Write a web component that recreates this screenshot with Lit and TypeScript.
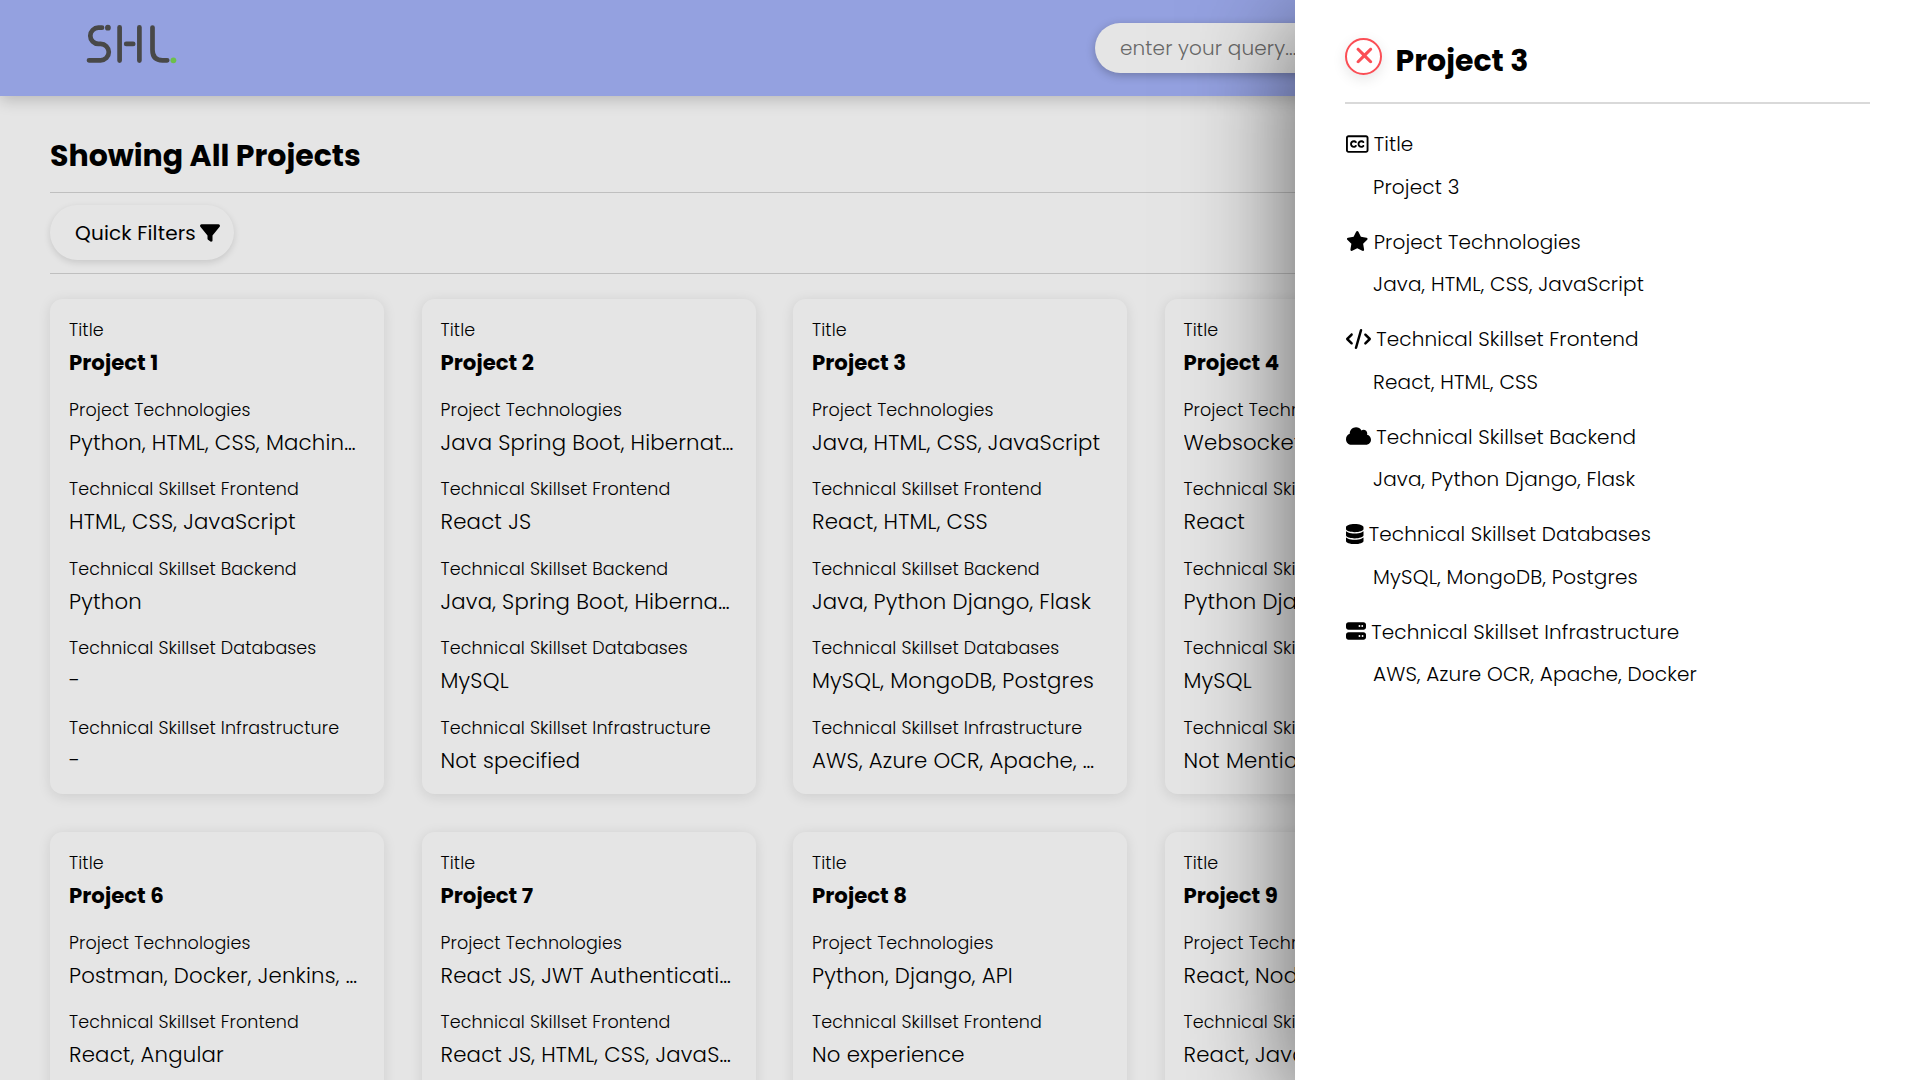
import { LitElement, html, css, svg } from "lit";
import { customElement, property } from "lit/decorators.js";

interface Project {
  title: string;
  technologies: string;
  frontend: string;
  backend: string;
  databases: string;
  infrastructure: string;
}

const p = (
  title: string,
  technologies: string,
  frontend: string,
  backend: string,
  databases: string,
  infrastructure: string
): Project => ({ title, technologies, frontend, backend, databases, infrastructure });

const PROJECTS: Project[] = [
  p("Project 1", "Python, HTML, CSS, Machine Learning", "HTML, CSS, JavaScript", "Python", "-", "-"),
  p("Project 2", "Java Spring Boot, Hibernate, MySQL", "React JS", "Java, Spring Boot, Hibernate, JPA", "MySQL", "Not specified"),
  p("Project 3", "Java, HTML, CSS, JavaScript", "React, HTML, CSS", "Java, Python Django, Flask", "MySQL, MongoDB, Postgres", "AWS, Azure OCR, Apache, Docker"),
  p("Project 4", "Websockets, Python", "React", "Python Django", "MySQL", "Not Mentioned"),
  p("Project 5", "Python", "React", "Python", "MySQL", "AWS"),
  p("Project 6", "Postman, Docker, Jenkins, AWS Cloud", "React, Angular", "Java", "MySQL", "AWS"),
  p("Project 7", "React JS, JWT Authentication", "React JS, HTML, CSS, JavaScript", "Java", "MySQL", "AWS"),
  p("Project 8", "Python, Django, API", "No experience", "Python", "MySQL", "AWS"),
  p("Project 9", "React, Node JS", "React, JavaScript", "Node JS", "MongoDB", "AWS"),
  p("Project 10", "React", "React", "Node JS", "MongoDB", "AWS"),
];

const ICONS: Record<string, { w: number; d: string }> = {
  captions: {
    w: 576,
    d: "M512 80c8.800 0 16 7.200 16 16V416c0 8.800-7.200 16-16 16H64c-8.800 0-16-7.200-16-16V96c0-8.800 7.200-16 16-16H512zM64 32C28.700 32 0 60.700 0 96V416c0 35.300 28.700 64 64 64H512c35.300 0 64-28.700 64-64V96c0-35.300-28.700-64-64-64H64zM200 208c14.200 0 27 6.100 35.800 16c8.800 9.900 24 10.700 33.900 1.900s10.700-24 1.900-33.900c-17.500-19.600-43.100-32-71.500-32c-53 0-96 43-96 96s43 96 96 96c28.400 0 54-12.400 71.500-32c8.800-9.900 8-25-1.900-33.900s-25-8-33.900 1.900c-8.800 9.900-21.600 16-35.800 16c-26.500 0-48-21.500-48-48s21.500-48 48-48zm144 48c0-26.500 21.500-48 48-48c14.200 0 27 6.100 35.800 16c8.800 9.900 24 10.700 33.900 1.900s10.700-24 1.900-33.900c-17.500-19.600-43.100-32-71.500-32c-53 0-96 43-96 96s43 96 96 96c28.400 0 54-12.400 71.500-32c8.800-9.900 8-25-1.900-33.900s-25-8-33.900 1.900c-8.800 9.900-21.600 16-35.800 16c-26.500 0-48-21.500-48-48z",
  },
  star: {
    w: 576,
    d: "M316.900 18C311.600 7 300.400 0 288.100 0s-23.400 7-28.800 18L195 150.300 51.400 171.500c-12 1.800-22 10.200-25.700 21.700s-.7 24.200 7.900 32.700L137.800 329 113.200 474.700c-2 12 3 24.200 12.900 31.300s23 8 33.800 2.300l128.300-68.500 128.300 68.500c10.800 5.700 23.900 4.900 33.800-2.300s14.900-19.300 12.900-31.300L438.500 329 542.700 225.900c8.600-8.500 11.700-21.200 7.900-32.700s-13.700-19.900-25.700-21.700L381.200 150.300 316.900 18z",
  },
  code: {
    w: 640,
    d: "M392.800 1.200c-17-4.900-34.700 5-39.600 22l-128 448c-4.900 17 5 34.700 22 39.600s34.700-5 39.600-22l128-448c4.900-17-5-34.700-22-39.600zm80.600 120.100c-12.500 12.500-12.500 32.800 0 45.300L562.700 256l-89.400 89.400c-12.500 12.500-12.500 32.800 0 45.300s32.800 12.500 45.300 0l112-112c12.500-12.500 12.500-32.800 0-45.300l-112-112c-12.500-12.500-32.800-12.500-45.300 0zm-306.700 0c-12.500-12.500-32.800-12.500-45.300 0l-112 112c-12.500 12.500-12.500 32.800 0 45.300l112 112c12.500 12.500 32.800 12.500 45.300 0s12.500-32.800 0-45.300L77.300 256l89.400-89.400c12.500-12.500 12.500-32.800 0-45.300z",
  },
  cloud: {
    w: 640,
    d: "M0 336c0 79.500 64.500 144 144 144H512c70.700 0 128-57.300 128-128c0-61.900-44-113.600-102.400-125.400c4.100-10.700 6.400-22.400 6.400-34.600c0-53-43-96-96-96c-19.700 0-38.100 6-53.300 16.200C367 64.200 315.300 32 256 32C167.600 32 96 103.600 96 192c0 2.700 .1 5.400 .2 8.100C40.200 219.800 0 273.200 0 336z",
  },
  database: {
    w: 448,
    d: "M448 80v48c0 44.200-100.300 80-224 80S0 172.200 0 128V80C0 35.800 100.300 0 224 0S448 35.800 448 80zM393.200 214.700c20.800-7.400 39.900-16.900 54.800-28.600V288c0 44.200-100.300 80-224 80S0 332.200 0 288V186.100c14.900 11.800 34 21.200 54.800 28.600C99.700 230.700 159.500 240 224 240s124.300-9.300 169.200-25.300zM0 346.100c14.900 11.800 34 21.200 54.800 28.600C99.700 390.700 159.500 400 224 400s124.300-9.300 169.200-25.300c20.800-7.400 39.900-16.900 54.800-28.600V432c0 44.200-100.300 80-224 80S0 476.200 0 432V346.100z",
  },
  server: {
    w: 512,
    d: "M64 32C28.700 32 0 60.700 0 96v64c0 35.300 28.700 64 64 64H448c35.300 0 64-28.700 64-64V96c0-35.300-28.700-64-64-64H64zm280 72a24 24 0 1 1 0 48 24 24 0 1 1 0-48zm48 24a24 24 0 1 1 48 0 24 24 0 1 1 -48 0zM64 288c-35.300 0-64 28.700-64 64v64c0 35.300 28.700 64 64 64H448c35.300 0 64-28.700 64-64V352c0-35.300-28.700-64-64-64H64zm280 72a24 24 0 1 1 0 48 24 24 0 1 1 0-48zm56 24a24 24 0 1 1 48 0 24 24 0 1 1 -48 0z",
  },
  filter: {
    w: 512,
    d: "M3.900 54.900C10.500 40.900 24.500 32 40 32H472c15.500 0 29.500 8.900 36.100 22.900s4.600 30.500-5.200 42.500L320 320.900V448c0 12.100-6.800 23.200-17.700 28.600s-23.800 4.300-33.500-3l-64-48c-8.100-6-12.800-15.500-12.800-25.600V320.900L9 97.300C-.7 85.400-2.800 68.800 3.900 54.900z",
  },
  xmark: {
    w: 384,
    d: "M342.600 150.600c12.500-12.500 12.500-32.800 0-45.300s-32.800-12.500-45.300 0L192 210.700 86.600 105.400c-12.500-12.500-32.800-12.500-45.300 0s-12.500 32.800 0 45.300L146.700 256 41.400 361.400c-12.500 12.500-12.500 32.800 0 45.300s32.800 12.500 45.300 0L192 301.300 297.400 406.600c12.500 12.500 32.800 12.500 45.300 0s12.500-32.800 0-45.300L237.300 256 342.600 150.600z",
  },
};

const icon = (name: string) => {
  const { w, d } = ICONS[name];
  return html`<svg class="icon" viewBox="0 0 ${w} 512" style="width:${w / 512}em">${svg`<path fill="currentColor" d=${d}></path>`}</svg>`;
};

@customElement("project-card")
export class ProjectCard extends LitElement {
  @property({ attribute: false }) project!: Project;

  static styles = css`
    :host {
      display: flex;
      flex-direction: column;
      gap: 17.7px;
      min-width: 0;
      box-sizing: border-box;
      height: 495px;
      padding: 18px 18.75px 0 19px;
      border-radius: 12.5px;
      background: #e5e5e5;
      box-shadow: 0 2.5px 12.5px rgba(0, 0, 0, 0.1);
    }
    .field {
      display: flex;
      flex-direction: column;
      gap: 3.75px;
    }
    .label {
      font-size: 17.5px;
      line-height: 26.25px;
      letter-spacing: 0.12px;
    }
    .value {
      padding-right: 1.5px;
      font-size: 21.25px;
      line-height: 31.9px;
      letter-spacing: 0.2px;
      overflow: hidden;
      text-overflow: ellipsis;
      white-space: nowrap;
    }
    .strong {
      font-weight: 700;
      letter-spacing: 0;
    }
  `;

  render() {
    const r = this.project;
    const rows = [
      ["Title", r.title],
      ["Project Technologies", r.technologies],
      ["Technical Skillset Frontend", r.frontend],
      ["Technical Skillset Backend", r.backend],
      ["Technical Skillset Databases", r.databases],
      ["Technical Skillset Infrastructure", r.infrastructure],
    ];
    return rows.map(
      ([label, value], i) => html`<div class="field">
        <div class="label">${label}</div>
        <div class="value ${i === 0 ? "strong" : ""}">${value}</div>
      </div>`
    );
  }
}

@customElement("project-panel")
export class ProjectPanel extends LitElement {
  @property({ attribute: false }) project!: Project;

  static styles = css`
    :host {
      display: block;
      box-sizing: border-box;
      padding: 38px 50px;
      background: #fff;
      box-shadow: 0 24px 100px rgba(0, 0, 0, 0.6);
    }
    .head {
      display: flex;
      height: 64px;
      border-bottom: 2px solid #d9d9d9;
    }
    .close {
      display: flex;
      align-items: center;
      justify-content: center;
      box-sizing: border-box;
      width: 37px;
      height: 37px;
      padding: 0 0 2px 2px;
      border: 2px solid #fb4e55;
      border-radius: 50%;
      background: #fff;
      color: #fb4e55;
      font-size: 25px;
      box-shadow: 0 4px 14px rgba(0, 0, 0, 0.1);
    }
    .name {
      margin: 0 0 0 13.5px;
      font-size: 30px;
      font-weight: 700;
      line-height: 45px;
    }
    .list {
      display: flex;
      flex-direction: column;
      gap: 25px;
      padding-top: 25px;
      font-size: 20px;
      line-height: 30px;
      letter-spacing: 0.17px;
    }
    .entry {
      display: flex;
      flex-direction: column;
      gap: 12.5px;
    }
    .label {
      padding-left: 0.6px;
      letter-spacing: 0.12px;
    }
    .value {
      padding-left: 28px;
    }
    .icon {
      height: 1em;
      overflow: visible;
      vertical-align: -0.125em;
    }
  `;

  render() {
    const r = this.project;
    const rows = [
      ["captions", "Title", r.title],
      ["star", "Project Technologies", r.technologies],
      ["code", "Technical Skillset Frontend", r.frontend],
      ["cloud", "Technical Skillset Backend", r.backend],
      ["database", "Technical Skillset Databases", r.databases],
      ["server", "Technical Skillset Infrastructure", r.infrastructure],
    ];
    return html`
      <div class="head">
        <div class="close">${icon("xmark")}</div>
        <h2 class="name">${r.title}</h2>
      </div>
      <div class="list">
        ${rows.map(
          ([name, label, value]) => html`<div class="entry">
            <div class="label">${icon(name)} ${label}</div>
            <div class="value">${value}</div>
          </div>`
        )}
      </div>
    `;
  }
}

@customElement("app-root")
export class AppRoot extends LitElement {
  static styles = css`
    :host {
      display: block;
      position: relative;
      height: 1080px;
      overflow: hidden;
      background: #e5e5e5;
      color: #000;
      font-family: Poppins, Inter, sans-serif;
      font-size: 20px;
      font-weight: 300;
    }
    .bar {
      display: flex;
      justify-content: space-between;
      align-items: flex-start;
      box-sizing: border-box;
      height: 96px;
      padding: 20px 75px 0 83px;
      background: #94a1e0;
      box-shadow: 0 4px 15px rgba(0, 0, 0, 0.2);
    }
    .logo {
      width: 100px;
      height: 48px;
    }
    .search {
      box-sizing: border-box;
      width: 750px;
      height: 50px;
      margin-top: 3px;
      padding: 0 25px;
      border-radius: 25px;
      background: #e5e5e5;
      color: #696969;
      line-height: 50px;
      letter-spacing: 0.12px;
      box-shadow: 0 2.5px 10px rgba(0, 0, 0, 0.25);
    }
    .main {
      padding: 36px 50px 0;
    }
    .heading {
      height: 60px;
      margin: 0;
      font-size: 30px;
      font-weight: 700;
      line-height: 48px;
      border-bottom: 1px solid #bfbfbf;
    }
    .filters {
      display: flex;
      align-items: flex-start;
      box-sizing: border-box;
      height: 81px;
      padding-top: 12px;
      border-bottom: 1px solid #bfbfbf;
    }
    .chip {
      box-sizing: border-box;
      width: 184px;
      height: 55px;
      padding-left: 25px;
      border-radius: 27.5px;
      font-weight: 400;
      line-height: 57px;
      letter-spacing: 0.17px;
      white-space: nowrap;
      box-shadow: 0 2.5px 7px rgba(0, 0, 0, 0.13);
    }
    .icon {
      height: 1em;
      overflow: visible;
      vertical-align: -0.125em;
    }
    .chip .icon {
      margin-left: -1.4px;
    }
    .grid {
      display: grid;
      grid-template-columns: repeat(5, minmax(0, 1fr));
      gap: 38.3px 37.5px;
      padding-top: 25px;
    }
    .drawer {
      position: absolute;
      top: 0;
      right: 0;
      width: 625px;
      height: 1080px;
    }
  `;

  render() {
    return html`
      <header class="bar">
        <svg class="logo" viewBox="83 20 100 48" fill="none" stroke="#484848" stroke-width="4.700" stroke-linecap="round">
          <path d="M102 27.700H98.400a8.100 8.100 0 0 0 0 16.200H100.600a8.200 8.200 0 0 1 0 16.400H89"></path>
          <path d="M119.600 27.300V60.600M139.400 27.300V60.600M126.200 43.900H133.200"></path>
          <path d="M152.500 27.500V50Q152.500 60.300 162.500 60.300H167.200"></path>
          <circle cx="107.900" cy="27.700" r="2.900" fill="#484848" stroke="none"></circle>
          <circle cx="173.400" cy="60.300" r="2.900" fill="#6cc04a" stroke="none"></circle>
        </svg>
        <div class="search">enter your query...</div>
      </header>
      <main class="main">
        <h1 class="heading">Showing All Projects</h1>
        <div class="filters">
          <div class="chip">Quick Filters ${icon("filter")}</div>
        </div>
        <div class="grid">
          ${PROJECTS.map((project) => html`<project-card .project=${project}></project-card>`)}
        </div>
      </main>
      <project-panel class="drawer" .project=${PROJECTS[2]}></project-panel>
    `;
  }
}
